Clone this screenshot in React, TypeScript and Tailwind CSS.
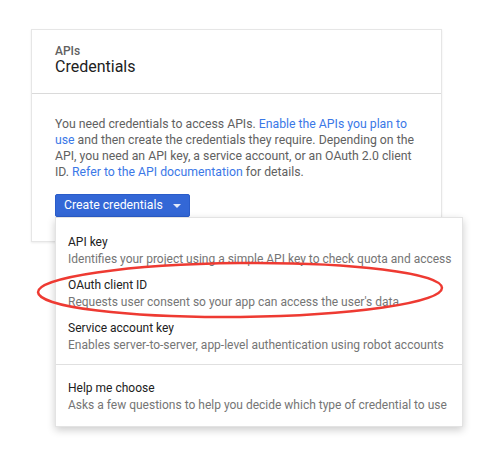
const options = [
  { title: 'API key', desc: 'Identifies your project using a simple API key to check quota and access' },
  { title: 'OAuth client ID', desc: "Requests user consent so your app can access the user's data" },
  { title: 'Service account key', desc: 'Enables server-to-server, app-level authentication using robot accounts' },
]

const MenuItem = ({ title, desc }: { title: string; desc: string }) => (
  <div className="px-[12px] pt-[5px] pb-[4px]">
    <div className="text-[12px] leading-[17px] text-[#212121]">{title}</div>
    <div className="text-[12px] leading-[17px] text-[#757575] whitespace-nowrap">{desc}</div>
  </div>
)

export default function App() {
  return (
    <div
      className="relative w-[494px] h-[454px] bg-white overflow-hidden"
      style={{ fontFamily: 'Roboto, "Liberation Sans", Arial, sans-serif' }}
    >
      <div className="pt-[29px] pl-[31px]">
        {/* Card */}
        <div className="w-[411px] bg-white border border-[#e6e6e6] shadow-[0_1px_2px_rgba(0,0,0,0.08)]">
          <div className="pl-[23px] pt-[15px] pb-[16px] border-b border-[#dadada]">
            <div className="text-[12px] leading-[12px] text-[#616161] font-medium">APIs</div>
            <div className="text-[16px] leading-[20px] text-[#212121]">Credentials</div>
          </div>
          <div className="pl-[23px] pr-[24px] pt-[22px] pb-[24px]">
            <p className="text-[12.25px] leading-[16px] text-[#616161]">
              You need credentials to access APIs.{' '}
              <span className="text-[#3b78e7]">Enable the APIs you plan to use</span> and then create the credentials
              they require. Depending on the API, you need an API key, a service account, or an OAuth 2.0 client ID.{' '}
              <span className="text-[#3b78e7]">Refer to the API documentation</span> for details.
            </p>
            <div className="relative mt-[14px]">
              <button className="flex items-center h-[23px] pl-[8px] pr-[8px] bg-[#3367d6] border border-[#2a5cc9] rounded-[2px] text-white text-[12.25px]">
                Create credentials
                <svg width="8" height="4" viewBox="0 0 8 4" className="ml-[10px]">
                  <path d="M0 0h8L4 4z" fill="#e3eaf9" />
                </svg>
              </button>
              {/* Dropdown menu */}
              <div className="absolute left-0 top-[23px] z-10 w-[408px] bg-white border border-[#e3e3e3] shadow-[0_3px_8px_rgba(0,0,0,0.2)]">
                <div className="pt-[11px] pb-[6px]">
                  {options.map(o => (
                    <MenuItem key={o.title} title={o.title} desc={o.desc} />
                  ))}
                </div>
                <div className="border-t border-[#e0e0e0]" />
                <div className="pt-[10px] pb-[8px]">
                  <MenuItem title="Help me choose" desc="Asks a few questions to help you decide which type of credential to use" />
                </div>
              </div>
            </div>
          </div>
        </div>
      </div>
      {/* Red annotation */}
      <svg className="absolute left-0 top-0 z-20 pointer-events-none" width="494" height="454">
        <ellipse
          cx="240"
          cy="290"
          rx="202"
          ry="27"
          fill="none"
          stroke="#ee3a32"
          strokeWidth="2.5"
          transform="rotate(-0.6 240 290)"
        />
      </svg>
    </div>
  )
}
